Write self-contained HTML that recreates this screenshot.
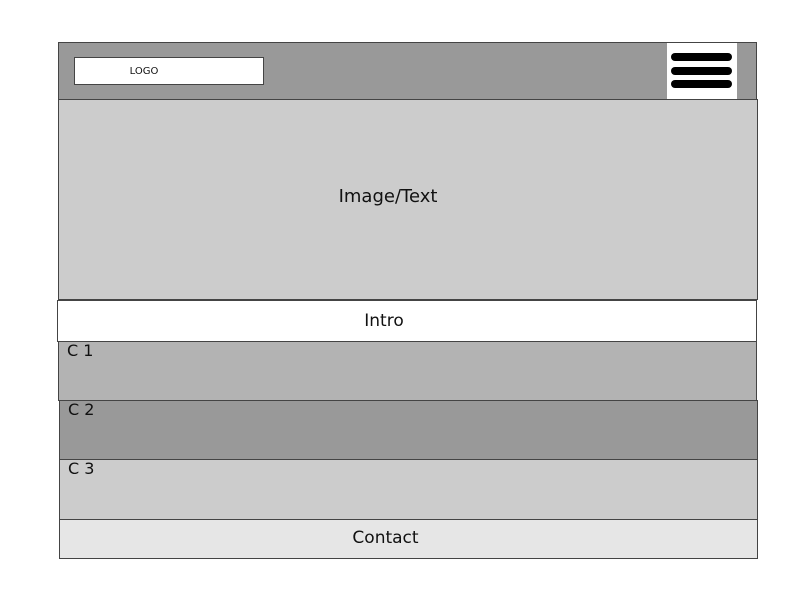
<!DOCTYPE html>
<html><head><style>
body{margin:0;width:800px;height:600px;background:#fff;position:relative;overflow:hidden;font-family:"DejaVu Sans","Liberation Sans",sans-serif;color:#111}
div{position:absolute;box-sizing:border-box}
.t{border:1px solid #444}
.c{display:flex;align-items:center;justify-content:center}
.lbl{font-size:16px;padding-left:8px;line-height:18px;padding-top:0}
.bar{background:#000;border-radius:4px;left:4px;width:61px;height:8px}
</style></head><body>
<div class="t" style="left:58px;top:42px;width:699px;height:58px;background:#999"></div>
<div class="t c" style="left:74px;top:57px;width:190px;height:28px;background:#fff;font-size:10px;padding-right:50px">LOGO</div>
<div style="left:667px;top:43px;width:70px;height:56px;background:#fff">
<div class="bar" style="top:10px"></div><div class="bar" style="top:24px"></div><div class="bar" style="top:37px"></div></div>
<div class="t c" style="left:58px;top:99px;width:700px;height:201px;background:#ccc;font-size:18px;padding-bottom:7px;padding-right:40px">Image/Text</div>
<div class="t c" style="left:57px;top:300px;width:700px;height:42px;background:#fff;font-size:17px;padding-right:46px">Intro</div>
<div class="t lbl" style="left:58px;top:341px;width:699px;height:60px;background:#b3b3b3">C 1</div>
<div class="t lbl" style="left:59px;top:400px;width:699px;height:60px;background:#999">C 2</div>
<div class="t lbl" style="left:59px;top:459px;width:699px;height:61px;background:#ccc">C 3</div>
<div class="t c" style="left:59px;top:519px;width:699px;height:40px;background:#e6e6e6;font-size:17px;padding-right:46px;padding-bottom:3px">Contact</div>
</body></html>
